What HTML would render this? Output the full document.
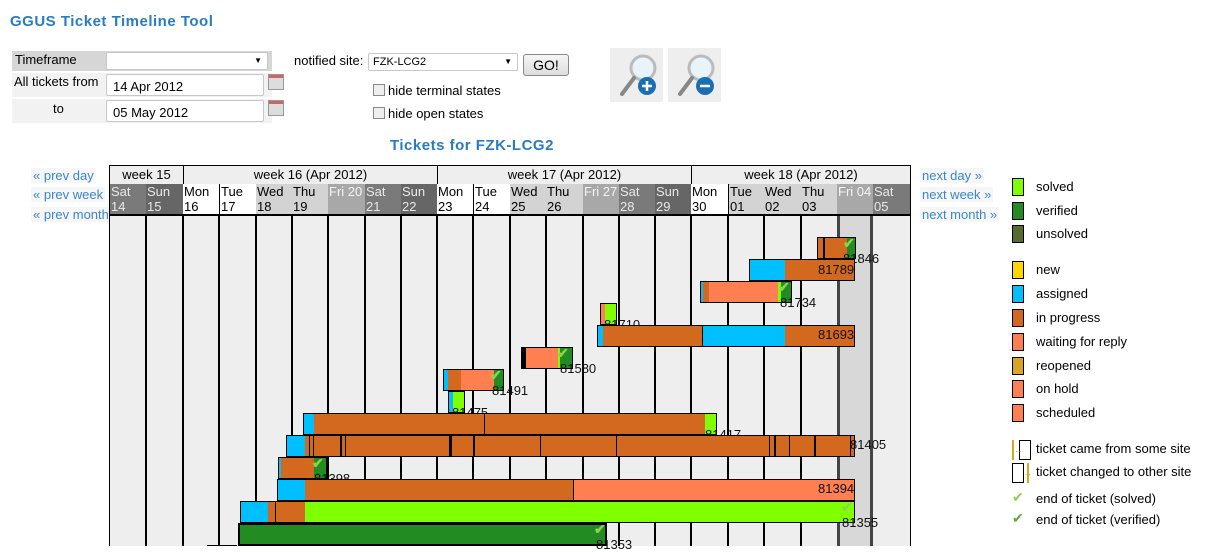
<!DOCTYPE html>
<html><head><meta charset="utf-8"><style>
*{margin:0;padding:0;box-sizing:border-box}
body{width:1220px;height:546px;overflow:hidden;background:#fff;font-family:"Liberation Sans",Arial,sans-serif;font-size:13px;color:#000;position:relative}
.a{position:absolute}
.t{color:#2b7bc0;font-weight:bold;letter-spacing:.5px}
.lnk{color:#3b86cf;font-size:13px}
.inp{position:absolute;background:#fff;border:1px solid #c8c8c8;border-radius:2px;font-size:13px;padding:3px 0 0 6px}
.cb{position:absolute;width:12px;height:12px;border:1px solid #888;background:#eee}
.cal{position:absolute;width:16px;height:16px;border:1px solid #999;background:linear-gradient(#c66 0,#c66 3px,#ddd 3px)}
.wk{position:absolute;top:165px;height:19px;border-left:1px solid #000;text-align:center;font-size:13px;line-height:17px;border-top:1px solid #000}
.dy{position:absolute;top:184px;height:31px;font-size:13px;line-height:15px;padding-left:1px;overflow:hidden;white-space:nowrap}
.vl{position:absolute;top:216px;height:330px;width:2px;background:#000}
.b{position:absolute;height:22px;border:1px solid #000;overflow:hidden}
.s{position:absolute;top:0;height:20px}
.lb{position:absolute;font-size:13px;color:#111}
.ck{position:absolute;color:#8fd14f;font-size:14px;font-weight:bold}
.lg{position:absolute;left:1012px;width:12px;height:18px;border:1px solid #000}
.lt{position:absolute;left:1036px;font-size:13px}
</style></head><body>
<div class="a t" style="left:10px;top:13px;font-size:15px">GGUS Ticket Timeline Tool</div>

<div class="a" style="left:12px;top:51px;width:92px;height:20px;background:#d6d6d6;padding:1px 0 0 3px">Timeframe</div>
<div class="a" style="left:104px;top:51px;width:168px;height:20px;background:#d6d6d6"></div>
<div class="inp" style="left:106px;top:52px;width:162px;height:18px"><span style="position:absolute;right:5px;top:3px;font-size:8px">▼</span></div>
<div class="a" style="left:12px;top:73px;width:260px;height:24px;background:#f2f2f2"></div>
<div class="a" style="left:14px;top:74px">All tickets from</div>
<div class="inp" style="left:106px;top:74px;width:158px;height:22px;padding-top:4px">14 Apr 2012</div>
<div class="cal" style="left:268px;top:74px"></div>
<div class="a" style="left:12px;top:99px;width:260px;height:24px;background:#f2f2f2"></div>
<div class="a" style="left:53px;top:101px">to</div>
<div class="inp" style="left:106px;top:100px;width:158px;height:22px;padding-top:4px">05 May 2012</div>
<div class="cal" style="left:268px;top:100px"></div>

<div class="a" style="left:294px;top:53px">notified site:</div>
<div class="inp" style="left:368px;top:53px;width:150px;height:18px;font-size:11px;padding:2px 0 0 4px">FZK-LCG2<span style="position:absolute;right:5px;top:3px;font-size:8px">▼</span></div>
<div class="a" style="left:523px;top:54px;width:46px;height:22px;border:1px solid #888;border-radius:3px;background:linear-gradient(#f6f6f6,#ddd);text-align:center;line-height:20px;font-size:14px">GO!</div>
<div class="cb" style="left:373px;top:84px"></div><div class="a" style="left:388px;top:83px">hide terminal states</div>
<div class="cb" style="left:373px;top:107px"></div><div class="a" style="left:388px;top:106px">hide open states</div>

<div class="a" style="left:610px;top:48px;width:53px;height:54px;background:#eee"></div>
<div class="a" style="left:668px;top:48px;width:53px;height:54px;background:#eee"></div>
<svg class="a" style="left:610px;top:48px" width="112" height="54">
<g><circle cx="33" cy="20" r="12" fill="#e8f4fa" stroke="#bbb" stroke-width="3"/><line x1="24" y1="30" x2="12" y2="46" stroke="#888" stroke-width="4" stroke-linecap="round"/><circle cx="37" cy="38" r="9" fill="#1a6fb4"/><path d="M37 33v10M32 38h10" stroke="#fff" stroke-width="2.5"/></g>
<g transform="translate(58,0)"><circle cx="33" cy="20" r="12" fill="#e8f4fa" stroke="#bbb" stroke-width="3"/><line x1="24" y1="30" x2="12" y2="46" stroke="#888" stroke-width="4" stroke-linecap="round"/><circle cx="37" cy="38" r="9" fill="#1a6fb4"/><path d="M32 38h10" stroke="#fff" stroke-width="2.5"/></g>
</svg>

<div class="a t" style="left:390px;top:137px;font-size:15px">Tickets for FZK-LCG2</div>

<div class="a lnk" style="left:31px;top:168px;background:#f6f6f6;padding:0 2px">« prev day</div>
<div class="a lnk" style="left:31px;top:187px;background:#f6f6f6;padding:0 2px">« prev week</div>
<div class="a lnk" style="left:31px;top:207px;background:#f6f6f6;padding:0 2px">« prev month</div>
<div class="a lnk" style="left:920px;top:168px;background:#f6f6f6;padding:0 2px">next day »</div>
<div class="a lnk" style="left:920px;top:187px;background:#f6f6f6;padding:0 2px">next week »</div>
<div class="a lnk" style="left:920px;top:207px;background:#f6f6f6;padding:0 2px">next month »</div>

<!-- chart -->
<div class="a" style="left:109px;top:165px;width:802px;height:381px;background:#eee;border-left:1px solid #000;border-right:1px solid #000"></div>
<div class="a" style="left:837px;top:216px;width:36px;height:330px;background:#d8d8d8;border-left:3px solid #444;border-right:3px solid #444"></div>
<div class="wk" style="left:109px;width:74px">week 15</div>
<div class="wk" style="left:183px;width:254px">week 16 (Apr 2012)</div>
<div class="wk" style="left:437px;width:254px">week 17 (Apr 2012)</div>
<div class="wk" style="left:691px;width:220px;border-right:1px solid #000">week 18 (Apr 2012)</div>

<div class="dy" style="left:110px;width:36px;background:#7a7a7a;color:#e8e8e8">Sat<br>14</div>
<div class="dy" style="left:146px;width:37px;background:#666;color:#e8e8e8">Sun<br>15</div>
<div class="dy" style="left:183px;width:36px;background:#fff">Mon<br>16</div>
<div class="dy" style="left:219px;width:37px;background:#fff;border-left:1px solid #000">Tue<br>17</div>
<div class="dy" style="left:256px;width:36px;background:#d3d3d3">Wed<br>18</div>
<div class="dy" style="left:292px;width:36px;background:#d3d3d3">Thu<br>19</div>
<div class="dy" style="left:328px;width:37px;background:#a8a8a8;color:#f4f4f4">Fri 20</div>
<div class="dy" style="left:365px;width:36px;background:#7a7a7a;color:#e8e8e8">Sat<br>21</div>
<div class="dy" style="left:401px;width:36px;background:#666;color:#e8e8e8">Sun<br>22</div>
<div class="dy" style="left:437px;width:36px;background:#fff">Mon<br>23</div>
<div class="dy" style="left:473px;width:37px;background:#fff;border-left:1px solid #000">Tue<br>24</div>
<div class="dy" style="left:510px;width:36px;background:#d3d3d3">Wed<br>25</div>
<div class="dy" style="left:546px;width:37px;background:#d3d3d3">Thu<br>26</div>
<div class="dy" style="left:583px;width:36px;background:#a8a8a8;color:#f4f4f4">Fri 27</div>
<div class="dy" style="left:619px;width:36px;background:#7a7a7a;color:#e8e8e8">Sat<br>28</div>
<div class="dy" style="left:655px;width:36px;background:#666;color:#e8e8e8">Sun<br>29</div>
<div class="dy" style="left:691px;width:37px;background:#fff">Mon<br>30</div>
<div class="dy" style="left:728px;width:36px;background:#d3d3d3;border-left:1px solid #000">Tue<br>01</div>
<div class="dy" style="left:764px;width:37px;background:#d3d3d3">Wed<br>02</div>
<div class="dy" style="left:801px;width:36px;background:#d3d3d3">Thu<br>03</div>
<div class="dy" style="left:837px;width:36px;background:#a8a8a8;color:#f4f4f4">Fri 04</div>
<div class="dy" style="left:873px;width:37px;background:#7a7a7a;color:#e8e8e8">Sat<br>05</div>
<div class="a" style="left:109px;top:214px;width:802px;height:2px;background:#000"></div>

<div class="vl" style="left:145px"></div><div class="vl" style="left:182px"></div><div class="vl" style="left:218px"></div><div class="vl" style="left:255px"></div><div class="vl" style="left:291px"></div><div class="vl" style="left:327px"></div><div class="vl" style="left:364px"></div><div class="vl" style="left:400px"></div><div class="vl" style="left:436px"></div><div class="vl" style="left:472px"></div><div class="vl" style="left:509px"></div><div class="vl" style="left:545px"></div><div class="vl" style="left:582px"></div><div class="vl" style="left:618px"></div><div class="vl" style="left:654px"></div><div class="vl" style="left:690px"></div><div class="vl" style="left:727px"></div><div class="vl" style="left:763px"></div><div class="vl" style="left:800px"></div>

<!-- bars -->
<div class="b" style="left:817px;top:237px;width:39px"><div class="s" style="left:0;width:5px;background:#d2691e"></div><div class="s" style="left:5px;width:2px;background:#000"></div><div class="s" style="left:7px;width:22px;background:#d2691e"></div><div class="s" style="left:29px;width:10px;background:#228b22"></div></div>
<div class="ck" style="left:843px;top:235px">✔</div><div class="lb" style="left:843px;top:251px">81846</div>

<div class="b" style="left:749px;top:259px;width:106px"><div class="s" style="left:0;width:35px;background:#00bfff"></div><div class="s" style="left:35px;width:70px;background:#d2691e"></div></div>
<div class="lb" style="left:818px;top:262px">81789</div>

<div class="b" style="left:700px;top:281px;width:92px"><div class="s" style="left:0;width:2px;background:#00bfff"></div><div class="s" style="left:2px;width:6px;background:#d2691e"></div><div class="s" style="left:8px;width:69px;background:#ff7f50"></div><div class="s" style="left:77px;width:3px;background:#7fff00"></div><div class="s" style="left:80px;width:12px;background:#228b22"></div></div>
<div class="ck" style="left:778px;top:279px">✔</div><div class="lb" style="left:780px;top:295px">81734</div>

<div class="b" style="left:600px;top:303px;width:17px"><div class="s" style="left:0;width:4px;background:#ff7f50"></div><div class="s" style="left:4px;width:13px;background:#7fff00"></div></div>
<div class="lb" style="left:604px;top:317px">81710</div>

<div class="b" style="left:597px;top:325px;width:258px"><div class="s" style="left:0;width:5px;background:#00bfff"></div><div class="s" style="left:5px;width:100px;background:#d2691e;border-right:1px solid #000"></div><div class="s" style="left:105px;width:82px;background:#00bfff"></div><div class="s" style="left:187px;width:71px;background:#d2691e"></div></div>
<div class="lb" style="left:818px;top:327px">81693</div>

<div class="b" style="left:521px;top:347px;width:52px"><div class="s" style="left:0;width:4px;background:#000"></div><div class="s" style="left:4px;width:32px;background:#ff7f50"></div><div class="s" style="left:36px;width:2px;background:#7fff00"></div><div class="s" style="left:38px;width:14px;background:#228b22"></div></div>
<div class="ck" style="left:557px;top:345px">✔</div><div class="lb" style="left:560px;top:361px">81580</div>

<div class="b" style="left:443px;top:369px;width:61px"><div class="s" style="left:0;width:4px;background:#00bfff"></div><div class="s" style="left:4px;width:13px;background:#d2691e"></div><div class="s" style="left:17px;width:33px;background:#ff7f50"></div><div class="s" style="left:50px;width:11px;background:#228b22"></div></div>
<div class="ck" style="left:490px;top:367px">✔</div><div class="lb" style="left:492px;top:383px">81491</div>

<div class="b" style="left:448px;top:391px;width:17px"><div class="s" style="left:0;width:4px;background:#00bfff"></div><div class="s" style="left:4px;width:13px;background:#7fff00"></div></div>
<div class="lb" style="left:452px;top:405px">81475</div>

<div class="b" style="left:303px;top:413px;width:414px"><div class="s" style="left:0;width:10px;background:#00bfff"></div><div class="s" style="left:10px;width:391px;background:#d2691e"></div><div class="s" style="left:180px;width:1px;background:#000"></div><div class="s" style="left:401px;width:13px;background:#7fff00"></div></div>
<div class="lb" style="left:705px;top:427px">81417</div>

<div class="b" style="left:286px;top:435px;width:569px"><div class="s" style="left:0;width:18px;background:#00bfff"></div><div class="s" style="left:18px;width:551px;background:#d2691e"></div>
<div class="s" style="left:22px;width:1px;background:#000"></div><div class="s" style="left:26px;width:1px;background:#000"></div><div class="s" style="left:53px;width:2px;background:#000"></div><div class="s" style="left:58px;width:1px;background:#000"></div><div class="s" style="left:162px;width:3px;background:#000"></div><div class="s" style="left:186px;width:2px;background:#000"></div><div class="s" style="left:253px;width:1px;background:#000"></div><div class="s" style="left:329px;width:1px;background:#000"></div><div class="s" style="left:482px;width:1px;background:#000"></div><div class="s" style="left:487px;width:2px;background:#000"></div><div class="s" style="left:502px;width:1px;background:#000"></div><div class="s" style="left:527px;width:2px;background:#000"></div><div class="s" style="left:563px;width:1px;background:#000"></div></div>
<div class="lb" style="left:850px;top:437px">81405</div>

<div class="b" style="left:278px;top:457px;width:49px"><div class="s" style="left:0;width:2px;background:#00bfff"></div><div class="s" style="left:2px;width:33px;background:#d2691e"></div><div class="s" style="left:35px;width:14px;background:#228b22"></div></div>
<div class="ck" style="left:312px;top:455px">✔</div><div class="lb" style="left:314px;top:471px">81398</div>

<div class="b" style="left:277px;top:479px;width:578px"><div class="s" style="left:0;width:27px;background:#00bfff"></div><div class="s" style="left:27px;width:269px;background:#d2691e;border-right:1px solid #000"></div><div class="s" style="left:296px;width:282px;background:#ff7f50"></div></div>
<div class="lb" style="left:818px;top:481px">81394</div>

<div class="b" style="left:240px;top:501px;width:615px"><div class="s" style="left:0;width:27px;background:#00bfff"></div><div class="s" style="left:27px;width:37px;background:#d2691e"></div><div class="s" style="left:34px;width:1px;background:#000"></div><div class="s" style="left:64px;width:551px;background:#7fff00"></div></div>
<div class="ck" style="left:841px;top:499px">✔</div><div class="lb" style="left:842px;top:515px">81355</div>

<div class="b" style="left:238px;top:523px;width:369px;height:23px;border-width:2px"><div class="s" style="left:0;width:369px;background:#228b22"></div></div>
<div class="ck" style="left:594px;top:521px">✔</div><div class="lb" style="left:596px;top:537px">81353</div>
<div class="a" style="left:207px;top:545px;width:30px;height:1px;background:#000"></div>

<!-- legend -->
<div class="lg" style="top:178px;background:#7fff00"></div><div class="lt" style="top:179px">solved</div>
<div class="lg" style="top:202px;background:#228b22"></div><div class="lt" style="top:203px">verified</div>
<div class="lg" style="top:225px;background:#556b2f"></div><div class="lt" style="top:226px">unsolved</div>
<div class="lg" style="top:261px;background:#ffd700"></div><div class="lt" style="top:262px">new</div>
<div class="lg" style="top:285px;background:#00bfff"></div><div class="lt" style="top:286px">assigned</div>
<div class="lg" style="top:309px;background:#d2691e"></div><div class="lt" style="top:310px">in progress</div>
<div class="lg" style="top:333px;background:#ff7f50"></div><div class="lt" style="top:334px">waiting for reply</div>
<div class="lg" style="top:357px;background:#daa520"></div><div class="lt" style="top:358px">reopened</div>
<div class="lg" style="top:380px;background:#ff7f50"></div><div class="lt" style="top:381px">on hold</div>
<div class="lg" style="top:404px;background:#ff7f50"></div><div class="lt" style="top:405px">scheduled</div>
<div class="a" style="left:1019px;top:440px;width:12px;height:20px;border:1px solid #000;background:#fff"></div>
<div class="a" style="left:1012px;top:440px;width:7px;height:20px;border-left:2px solid #daa520;color:#daa520;font-size:9px;line-height:20px">←</div>
<div class="lt" style="top:441px">ticket came from some site</div>
<div class="a" style="left:1012px;top:463px;width:12px;height:20px;border:1px solid #000;background:#fff"></div>
<div class="a" style="left:1023px;top:463px;width:6px;height:20px;border-right:2px solid #daa520;color:#daa520;font-size:9px;line-height:20px">→</div>
<div class="lt" style="top:464px">ticket changed to other site</div>
<div class="a" style="left:1012px;top:489px;color:#8fd14f;font-size:14px">✔</div><div class="lt" style="top:491px">end of ticket (solved)</div>
<div class="a" style="left:1012px;top:510px;color:#5fa83a;font-size:14px">✔</div><div class="lt" style="top:512px">end of ticket (verified)</div>
</body></html>
